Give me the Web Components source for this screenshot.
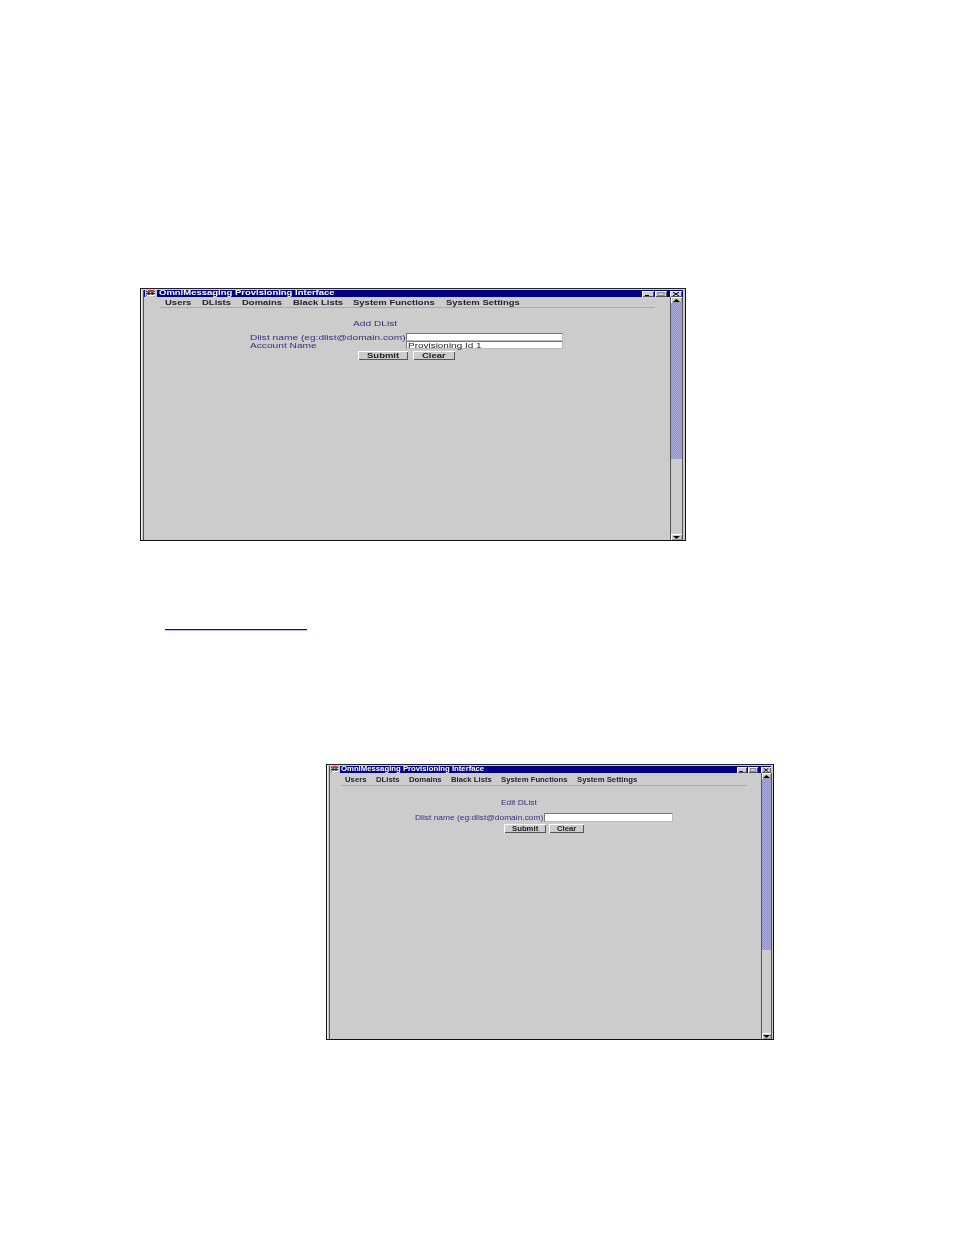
<!DOCTYPE html>
<html><head><meta charset="utf-8"><style>
html,body{margin:0;background:#fff}
body{font-family:"Liberation Sans",sans-serif}
#page{width:954px;height:1235px;overflow:hidden;display:flex;flex-direction:column;align-items:flex-start;box-sizing:border-box;padding:288px 0 0 140px}
#w1{--fs:6.5px;--sx:1.46;--sr:1.565;--sv:1.53;--h:8px;--lh:10px;--label:156px;--input:157px;--menu-gap:11px;--ico:12px;--ico-l:1px;--ico-r:2px;--wb:12px;--wb-gap:1px;--wb-close-gap:3px;--wb-close-r:1px;--sb-r:2px;--sep-t:1px;--menu-t:2px;width:546px;height:253px}
#w2{--fs:6.5px;--sx:1.19;--sr:1.29;--sv:1.29;--h:9px;--lh:9px;--label:129px;--input:129px;--menu-gap:9.5px;--ico:10px;--ico-l:0px;--ico-r:1px;--wb:10px;--wb-gap:1px;--wb-close-gap:3px;--wb-close-r:0px;--sb-r:1px;--sep-t:2px;--menu-t:3px;width:448px;height:276px;margin:134px 0 0 186px}
#l{margin:88px 0 0 25px}
</style></head><body>
<div id="page">
<app-window id="w1" title="OmniMessaging Provisioning Interface" menu-left="22" sep-left="17" sep-right="15" thumb-top="6" thumb-h="156" sb="13">
  <app-heading style="margin:12px 0 0 209px">Add DList</app-heading>
  <form-field style="margin:6px 0 0 106px" label="Dlist name (eg:dlist@domain.com)"></form-field>
  <form-field style="margin:0 0 0 106px" label="Account Name" value="Provisioning Id 1"></form-field>
  <div style="display:flex;gap:5px;margin:2px 0 0 214px"><app-button style="width:50px">Submit</app-button><app-button style="width:42px">Clear</app-button></div>
</app-window>
<blank-link id="l"></blank-link>
<app-window id="w2" title="OmniMessaging Provisioning Interface" menu-left="16" sep-left="12" sep-right="14" thumb-top="6" thumb-h="171" sb="11">
  <app-heading style="margin:13px 0 0 171px">Edit DList</app-heading>
  <form-field style="margin:7px 0 0 85px" label="Dlist name (eg:dlist@domain.com)"></form-field>
  <div style="display:flex;gap:3px;margin:2px 0 0 174px"><app-button style="width:42px">Submit</app-button><app-button style="width:35px">Clear</app-button></div>
</app-window>
</div>
<script>
/* text stretched horizontally; the host keeps the stretched width in the flow */
class WideText extends HTMLElement{
 connectedCallback(){
  if(this.shadowRoot)return;
  const s=this.attachShadow({mode:'open'});
  s.innerHTML=`<style>:host{display:inline-block;white-space:nowrap;vertical-align:top}
  span{display:inline-block;transform:scaleX(var(--k,var(--sx,1)));transform-origin:0 50%;filter:blur(.3px)}</style><span><slot></slot></span>`;
  const sp=s.querySelector('span');
  const cs=getComputedStyle(this);
  const sx=parseFloat(cs.getPropertyValue('--k'))||parseFloat(cs.getPropertyValue('--sx'))||1;
  this.style.width=(sp.offsetWidth*sx)+'px';
 }
}
customElements.define('wide-text',WideText);
class AppWindow extends HTMLElement{
 connectedCallback(){
  const a=n=>this.getAttribute(n);
  const s=this.attachShadow({mode:'open'});
  const items=['Users','DLists','Domains','Black Lists','System Functions','System Settings'];
  s.innerHTML=`<style>
  :host{display:flex;flex-direction:column;box-sizing:border-box;background:#ccc;border:1px solid #111;border-top-color:#222;box-shadow:inset 1px 0 #eee,inset 2px 0 #ccc;padding:0 0 0 2px;position:relative;color:#000}
  .bar{height:7px;margin-top:1px;margin-right:2px;border-left:1px solid #555;background:#000080;display:flex;align-items:center;color:#fff;font:bold var(--fs)/6px "Liberation Sans",sans-serif}
  .ico{width:var(--ico);height:7px;margin:0 var(--ico-r) 0 var(--ico-l);flex:none;display:block}
  .t{flex:1;height:7px;overflow:visible}
  .wb{width:var(--wb);height:6px;background:#ccc;box-shadow:inset 1px 1px #fff,inset -1px -1px #555;margin-left:var(--wb-gap);flex:none;display:block}
  .wb.c{margin-left:var(--wb-close-gap);margin-right:var(--wb-close-r)}
  .main{flex:1;display:flex;min-height:0;border-left:1px solid #555}
  .content{flex:1;min-width:0;display:flex;flex-direction:column}
  .menu{display:flex;gap:var(--menu-gap);padding:var(--menu-t) 0 0 ${+a('menu-left')-1}px;height:7px;font:bold var(--fs)/7px "Liberation Sans",sans-serif;color:#223}
  .sep{height:1px;background:#aaa;margin:var(--sep-t) ${a('sep-right')}px 0 ${+a('sep-left')-1}px}
  .sb{width:${a('sb')}px;flex:none;margin-right:var(--sb-r);border-left:1px solid #555;border-right:1px solid #555;box-sizing:border-box;display:flex;flex-direction:column;background:#ccc}
  .arrow{height:${a('thumb-top')}px;flex:none;background:#ccc;box-shadow:inset 1px 1px #fff,inset -1px -1px #999;display:flex;align-items:center;justify-content:center}
  .thumb{height:${a('thumb-h')}px;flex:none;background:#9c9ccf repeating-conic-gradient(#8f8fc4 0 25%,#adaddb 0 50%) 0 0/2px 2px}
  .track{flex:1}
  </style>
  <div class="bar"><svg class="ico" viewBox="0 0 12 7" preserveAspectRatio="none"><rect width="12" height="7" fill="#ccc"/><path d="M1 1l9 5M10 1L1 6M1 3.5h9" stroke="#223" stroke-width="1"/><path d="M3 0h6v2H3z" fill="#c33"/><path d="M2 5h8v1H2z" fill="#fff"/></svg>
  <span class="t"><wide-text>${a('title')}</wide-text></span>
  <svg class="wb" viewBox="0 0 12 6" preserveAspectRatio="none"><path d="M3 4.5h4" stroke="#000"/></svg><svg class="wb" viewBox="0 0 12 6" preserveAspectRatio="none"><rect x="3" y="1.5" width="6" height="3" fill="none" stroke="#888"/></svg><svg class="wb c" viewBox="0 0 12 6" preserveAspectRatio="none"><path d="M3 1l6 4M9 1L3 5" stroke="#000"/></svg></div>
  <div class="main"><div class="content"><div class="menu">${items.map(i=>`<wide-text>${i}</wide-text>`).join('')}</div><div class="sep"></div><slot></slot></div>
  <div class="sb"><div class="arrow"><svg width="7" height="3"><path d="M3.5 0L7 3H0z"/></svg></div><div class="thumb"></div><div class="track"></div><div class="arrow"><svg width="7" height="3"><path d="M0 0h7L3.5 3z"/></svg></div></div></div>`;
 }
}
class AppHeading extends HTMLElement{
 connectedCallback(){this.attachShadow({mode:'open'}).innerHTML=`<style>:host{display:block;font:var(--fs)/7px "Liberation Sans",sans-serif;color:#33337a;--k:var(--sr)}</style><wide-text>${this.textContent}</wide-text>`}
}
class FormField extends HTMLElement{
 connectedCallback(){
  const s=this.attachShadow({mode:'open'});
  s.innerHTML=`<style>:host{display:flex;height:var(--h);align-items:stretch;font:var(--fs)/var(--lh) "Liberation Sans",sans-serif;--k:var(--sr)}
  .l{width:var(--label);flex:none;color:#33337a}
  .i{--k:var(--sv);width:var(--input);flex:none;box-sizing:border-box;background:#fff;border:1px solid #bbb;border-top-color:#777;border-left-color:#777;padding-left:1px;color:#222;line-height:var(--h)}</style>
  <span class="l"><wide-text>${this.getAttribute('label')}</wide-text></span><span class="i"><wide-text>${this.getAttribute('value')||''}</wide-text></span>`;
 }
}
class AppButton extends HTMLElement{
 connectedCallback(){this.attachShadow({mode:'open'}).innerHTML=`<style>:host{display:flex;align-items:center;justify-content:center;height:9px;box-sizing:border-box;background:#ccc;box-shadow:inset 1px 1px #fff,inset -1px -1px #555;font:bold var(--fs)/9px "Liberation Sans",sans-serif;color:#222}</style><wide-text>${this.textContent}</wide-text>`}
}
class BlankLink extends HTMLElement{
 constructor(){super();this.attachShadow({mode:'open'}).innerHTML=`<style>:host{display:block;width:142px;height:1px;background:#0000e6;box-shadow:0 1px rgba(0,0,230,.25)}</style>`}
}
customElements.define('app-window',AppWindow);
customElements.define('app-heading',AppHeading);
customElements.define('form-field',FormField);
customElements.define('app-button',AppButton);
customElements.define('blank-link',BlankLink);
</script>
</body></html>
